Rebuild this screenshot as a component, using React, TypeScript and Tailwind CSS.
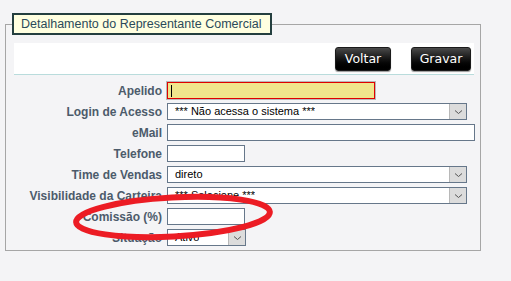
import React from 'react';

const labelCls = "text-right text-[12px] font-bold text-[#4c5b6b] whitespace-nowrap leading-none";
const boxCls = "h-[17px] border border-[#66778a] bg-white flex items-center";

const Chevron: React.FC = () => (
  <div className="h-full w-[17px] bg-[#dcdcdc] border-l border-[#b8b8b8] flex items-center justify-center">
    <svg width="9" height="6" viewBox="0 0 9 6" fill="none">
      <path d="M1 1.5 L4.5 4.5 L8 1.5" stroke="#555" strokeWidth="1" />
    </svg>
  </div>
);

const Select: React.FC<{ value: string; width: string }> = ({ value, width }) => (
  <div className={`${boxCls} ${width} justify-between`}>
    <span className="pl-[7px] text-[11px] text-black leading-none truncate">{value}</span>
    <Chevron />
  </div>
);

const Text: React.FC<{ width: string }> = ({ width }) => <div className={`${boxCls} ${width}`} />;

const Button: React.FC<{ label: string; width: string }> = ({ label, width }) => (
  <button className={`${width} h-[24px] rounded-[3px] border border-[#1a1a1a] bg-gradient-to-b from-[#4a4a4a] via-[#151515] to-[#000] text-white text-[12.5px] shadow-[0_1px_1px_rgba(0,0,0,0.4)] [font-family:'DejaVu_Sans',sans-serif]`}>
    {label}
  </button>
);

export default function App() {
  return (
    <div className="relative w-[511px] h-[281px] bg-[#f4f4f6] pl-[5px] pt-[13px] [font-family:'Liberation_Sans',Arial,sans-serif] overflow-hidden">
      <fieldset className="w-[476px] h-[238px] border border-[#a6a6a6]">
        <legend className="ml-[6px] h-[22px] w-[260px] border-2 border-[#243f3f] bg-[#ffffe0] pl-[7px] text-[12.5px] leading-[18px] text-[#2b4a5a]">
          Detalhamento do Representante Comercial
        </legend>
        <div className="mt-[8px] ml-[8px] mr-[6px] h-[32px] bg-white border-b border-[#b9dcdc] flex justify-end items-start pt-[4px] pr-[3px] gap-[20px]">
          <Button label="Voltar" width="w-[56px]" />
          <Button label="Gravar" width="w-[60px]" />
        </div>
        <div className="mt-[7px] grid grid-cols-[156px_auto] gap-x-[5px] gap-y-[4px] items-center">
          <span className={labelCls}>Apelido</span>
          <div className="h-[17px] w-[208px] border border-[#e00000] shadow-[0_0_0_1px_#b8b8b8] bg-[#f0e68c] flex items-center pl-[3px]">
            <span className="w-[1px] h-[12px] bg-black" />
          </div>

          <span className={labelCls}>Login de Acesso</span>
          <Select value="*** Não acessa o sistema ***" width="w-[300px]" />

          <span className={labelCls}>eMail</span>
          <Text width="w-[308px]" />

          <span className={labelCls}>Telefone</span>
          <Text width="w-[78px]" />

          <span className={labelCls}>Time de Vendas</span>
          <Select value="direto" width="w-[300px]" />

          <span className={labelCls}>Visibilidade da Carteira</span>
          <Select value="*** Selecione ***" width="w-[300px]" />

          <span className={labelCls}>Comissão (%)</span>
          <Text width="w-[78px]" />

          <span className={labelCls}>Situação</span>
          <Select value="Ativo" width="w-[79px]" />
        </div>
      </fieldset>

      <svg className="absolute left-0 top-0 pointer-events-none" width="511" height="281">
        <ellipse cx="173" cy="217" rx="97" ry="19.5" fill="none" stroke="#ec1c24" strokeWidth="6" transform="rotate(-3 173 217)" />
      </svg>
    </div>
  );
}
